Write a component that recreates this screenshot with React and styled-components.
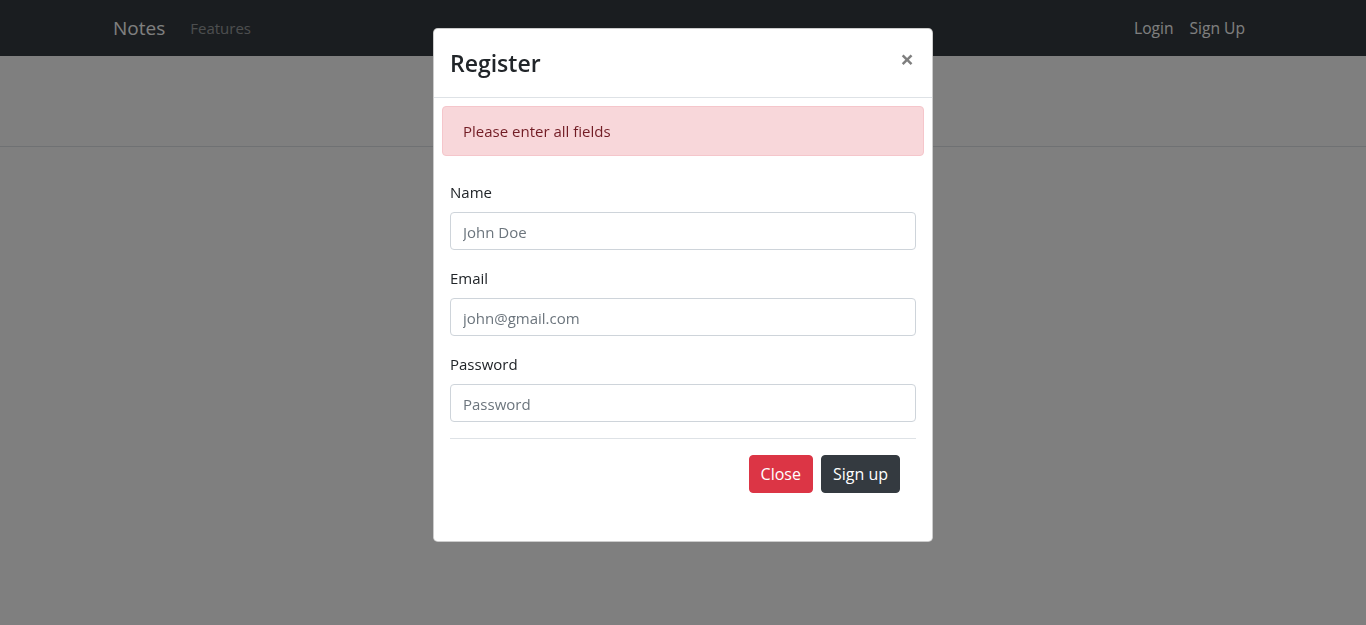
import styled, { createGlobalStyle } from "styled-components";

const GlobalStyle = createGlobalStyle`
  * { box-sizing: border-box; }
  html, body { margin: 0; padding: 0; }
  body {
    font-family: "Open Sans", "Noto Sans", sans-serif;
    font-size: 15px;
    line-height: 24px;
    color: #212529;
    background: #fff;
    height: 625px;
    overflow: hidden;
  }
`;

const Navbar = styled.nav`
  background: #343a40;
  height: 56px;
  display: flex;
  align-items: center;
`;

const NavContainer = styled.div`
  width: 1140px;
  margin: 0 auto;
  display: flex;
  align-items: center;
`;

const Brand = styled.a`
  font-size: 19px;
  line-height: 30px;
  color: #fff;
  margin-right: 17px;
  text-decoration: none;
`;

const NavLink = styled.a`
  color: ${(p) => (p.$bright ? "#fff" : "rgba(255, 255, 255, 0.5)")};
  padding: 8px;
  font-size: ${(p) => (p.$bright ? "15.6px" : "15px")};
  text-decoration: none;
`;

const NavRight = styled.div`
  margin-left: auto;
  display: flex;
`;

const Header = styled.header`
  height: 91px;
  border-bottom: 1px solid #dee2e6;
`;

const Backdrop = styled.div`
  position: fixed;
  inset: 0;
  background: rgba(0, 0, 0, 0.5);
`;

const Dialog = styled.div`
  position: fixed;
  top: 28px;
  left: 50%;
  transform: translateX(-50%);
  width: 500px;
  background: #fff;
  border: 1px solid rgba(0, 0, 0, 0.2);
  border-radius: 4.8px;
`;

const ModalHeader = styled.div`
  display: flex;
  justify-content: space-between;
  align-items: center;
  height: 69px;
  padding: 2px 16px 0;
  border-bottom: 1px solid #dee2e6;
`;

const Title = styled.h3`
  margin: 0;
  font-size: 23px;
  font-weight: 600;
  line-height: 1.2;
`;

const CloseX = styled.button`
  border: 0;
  background: transparent;
  font-size: 24px;
  font-weight: 700;
  line-height: 1;
  color: #000;
  opacity: 0.5;
  padding: 0;
  margin-right: 2px;
  margin-top: -10px;
  font-family: inherit;
`;

const Alert = styled.div`
  margin: 8px;
  padding: 12px 20px;
  background: #f8d7da;
  border: 1px solid #f5c6cb;
  color: #721c24;
  border-radius: 4px;
`;

const Form = styled.form`
  padding: 16px 16px 48px;
`;

const Group = styled.div`
  margin-bottom: 16px;
`;

const Label = styled.label`
  display: block;
  margin-bottom: 8px;
  padding-top: 1px;
  margin-top: -1px;
`;

const Input = styled.input`
  display: block;
  width: 100%;
  height: 38px;
  padding: 7px 12px 5px;
  font: inherit;
  color: #495057;
  border: 1px solid #ced4da;
  border-radius: 4px;
  &::placeholder { color: #6c757d; }
`;

const Rule = styled.hr`
  margin: 16px 0;
  border: 0;
  border-top: 1px solid #dee2e6;
`;

const Actions = styled.div`
  display: flex;
  justify-content: flex-end;
  gap: 8px;
  padding-right: 16px;
`;

const Button = styled.button`
  height: 38px;
  padding: 6px 11px;
  font-family: inherit;
  font-size: 16px;
  color: #fff;
  border: 1px solid ${(p) => p.$bg};
  background: ${(p) => p.$bg};
  border-radius: 4px;
`;

export default function App() {
  return (
    <>
      <GlobalStyle />
      <Navbar>
        <NavContainer>
          <Brand>Notes</Brand>
          <NavLink>Features</NavLink>
          <NavRight>
            <NavLink $bright>Login</NavLink>
            <NavLink $bright>Sign Up</NavLink>
          </NavRight>
        </NavContainer>
      </Navbar>
      <Header />
      <Backdrop />
      <Dialog>
        <ModalHeader>
          <Title>Register</Title>
          <CloseX>×</CloseX>
        </ModalHeader>
        <Alert>Please enter all fields</Alert>
        <Form onSubmit={(e) => e.preventDefault()}>
          <Group>
            <Label>Name</Label>
            <Input placeholder="John Doe" />
          </Group>
          <Group>
            <Label>Email</Label>
            <Input placeholder="john@gmail.com" />
          </Group>
          <Group>
            <Label>Password</Label>
            <Input type="password" placeholder="Password" />
          </Group>
          <Rule />
          <Actions>
            <Button type="button" $bg="#dc3545">Close</Button>
            <Button type="submit" $bg="#343a40">Sign up</Button>
          </Actions>
        </Form>
      </Dialog>
    </>
  );
}
